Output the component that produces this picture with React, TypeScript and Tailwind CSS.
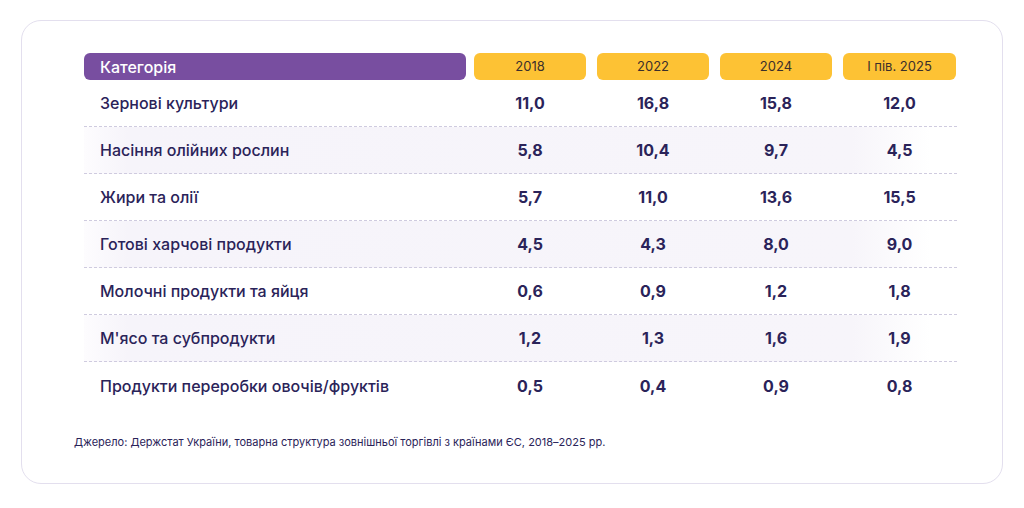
const years = ["2018", "2022", "2024", "I пів. 2025"];

const rows: { name: string; values: string[] }[] = [
  { name: "Зернові культури", values: ["11,0", "16,8", "15,8", "12,0"] },
  { name: "Насіння олійних рослин", values: ["5,8", "10,4", "9,7", "4,5"] },
  { name: "Жири та олії", values: ["5,7", "11,0", "13,6", "15,5"] },
  { name: "Готові харчові продукти", values: ["4,5", "4,3", "8,0", "9,0"] },
  { name: "Молочні продукти та яйця", values: ["0,6", "0,9", "1,2", "1,8"] },
  { name: "М'ясо та субпродукти", values: ["1,2", "1,3", "1,6", "1,9"] },
  { name: "Продукти переробки овочів/фруктів", values: ["0,5", "0,4", "0,9", "0,8"] },
];

const App = () => {
  return (
    <div className="w-[1024px] h-[508px] bg-white pt-5 pl-[21px] font-['Inter',sans-serif]">
      <div className="w-[982px] h-[464px] rounded-[20px] border border-[#e3dfee] bg-white pt-8 pl-[62px] pr-[35px]">
        <div className="w-[873px]">
          <div className="grid grid-cols-[379px_112px_112px_112px_113px] gap-x-[11px] h-[27px]">
            <div className="flex w-[382px] items-center rounded-[6px] bg-[#784ea0] pl-4 text-[16px] font-medium text-white">
              Категорія
            </div>
            {years.map((y) => (
              <div
                key={y}
                className="flex items-center justify-center rounded-[6px] bg-[#fdc234] text-[13px] text-[#3b2f2c]"
              >
                {y}
              </div>
            ))}
          </div>

          <div className="flex flex-col">
            {rows.map((row, i) => (
              <div
                key={row.name}
                className={
                  "grid grid-cols-[379px_112px_112px_112px_113px] gap-x-[11px] h-[47px] items-center text-[#2a2359] " +
                  (i < rows.length - 1 ? "border-b border-dashed border-[#cfcbdf] " : "") +
                  (i % 2 === 1
                    ? "bg-[linear-gradient(90deg,#fdfcfe_0%,#f6f4fa_5%,#f7f5fa_88%,#ffffff_97%)]"
                    : "")
                }
              >
                <div className="pl-4 text-[16px] font-medium">{row.name}</div>
                {row.values.map((v, j) => (
                  <div key={j} className="text-center text-[16px] font-bold">
                    {v}
                  </div>
                ))}
              </div>
            ))}
          </div>
        </div>

        <p className="mt-[25px] -ml-[10px] text-[11px] text-[#2a2359]">
          Джерело: Держстат України, товарна структура зовнішньої торгівлі з країнами ЄС, 2018–2025 рр.
        </p>
      </div>
    </div>
  );
};

export default App;
